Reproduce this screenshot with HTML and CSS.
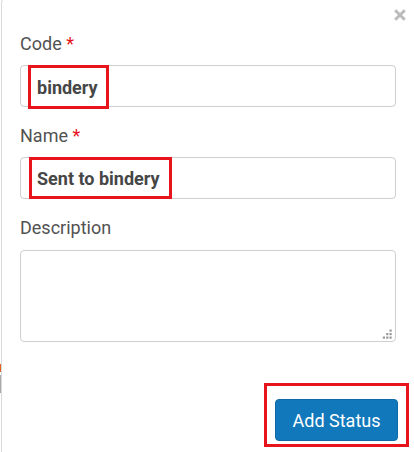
FILE: index.html
```html
<!DOCTYPE html>
<html lang="en">
<head>
<meta charset="utf-8">
<title>Add Status</title>
<link rel="stylesheet" href="styles.css">
</head>
<body>
<div class="page">
  <div class="backdrop-strip">
    <span class="strip-orange"></span>
    <span class="strip-gray"></span>
  </div>
  <div class="modal">
    <button class="close" type="button" aria-label="Close">
      <svg width="12" height="12" viewBox="0 0 12 12"><path d="M1.2 1.2 L10.8 10.8 M10.8 1.2 L1.2 10.8" stroke="#bbbbbb" stroke-width="3" stroke-linecap="butt"/></svg>
    </button>
    <div class="group">
      <label class="label">Code <span class="req">*</span></label>
      <div class="field"><span class="mark mark-code">bindery</span></div>
    </div>
    <div class="group">
      <label class="label">Name <span class="req">*</span></label>
      <div class="field"><span class="mark mark-name">Sent to bindery</span></div>
    </div>
    <div class="group">
      <label class="label">Description</label>
      <div class="textarea-wrap">
        <textarea class="textarea"></textarea>
        <svg class="grip" width="10" height="10" viewBox="0 0 10 10">
          <rect x="7.5" y="0.5" width="2.2" height="2.2" fill="#9a9a9a"/>
          <rect x="4.2" y="4" width="2.2" height="2.2" fill="#9a9a9a"/>
          <rect x="7.5" y="4" width="2.2" height="2.2" fill="#9a9a9a"/>
          <rect x="0.8" y="7.5" width="2.2" height="2.2" fill="#9a9a9a"/>
          <rect x="4.2" y="7.5" width="2.2" height="2.2" fill="#9a9a9a"/>
          <rect x="7.5" y="7.5" width="2.2" height="2.2" fill="#9a9a9a"/>
        </svg>
      </div>
    </div>
    <div class="footer">
      <div class="mark-btn">
        <button class="btn" type="button">Add Status</button>
      </div>
    </div>
  </div>
</div>
</body>
</html>
```

FILE: styles.css
```css
html, body {
  margin: 0;
  padding: 0;
  background: #ffffff;
  overflow: hidden;
}
body {
  font-family: Roboto, "Liberation Sans", sans-serif;
}
.page {
  display: flex;
  height: 452px;
}
.backdrop-strip {
  width: 1px;
  display: flex;
  flex-direction: column;
  padding-top: 364px;
}
.strip-orange {
  display: block;
  height: 8px;
  background: #e2612a;
}
.strip-gray {
  display: block;
  margin-top: 3px;
  height: 18px;
  background: #a8a8a8;
}
.modal {
  position: relative;
  flex: 1;
  margin-top: -3px;
  border: 1px solid #d9d9d9;
  border-right: none;
  border-bottom: none;
  border-top-left-radius: 6px;
  padding: 35px 18px 0 18px;
  background: #ffffff;
}
.close {
  position: absolute;
  top: 11px;
  right: 8px;
  width: 12px;
  height: 12px;
  padding: 0;
  border: none;
  background: transparent;
  display: flex;
}
.group + .group {
  margin-top: 18px;
}
.label {
  display: block;
  font-size: 18px;
  line-height: 22px;
  color: #525252;
  margin-bottom: 10px;
}
.req {
  color: #e8141c;
}
.field {
  box-sizing: border-box;
  height: 42px;
  border: 1px solid #cfcfcf;
  border-radius: 4px;
  display: flex;
  align-items: flex-start;
}
.mark {
  box-sizing: border-box;
  display: flex;
  align-items: center;
  margin-top: -1px;
  border: 3px solid #e8141c;
  font-size: 18px;
  font-weight: 700;
  color: #464646;
  padding-left: 6px;
}
.mark-code {
  margin-left: 7px;
  width: 81px;
  height: 44px;
}
.mark-name {
  margin-left: 8px;
  width: 143px;
  height: 42px;
  padding-left: 5px;
}
.textarea-wrap {
  position: relative;
  margin-top: 11px;
  height: 92px;
}
.textarea {
  display: block;
  box-sizing: border-box;
  width: 100%;
  height: 92px;
  margin: 0;
  border: 1px solid #cfcfcf;
  border-radius: 4px;
  resize: none;
  outline: none;
  font-family: inherit;
}
.grip {
  position: absolute;
  right: 4px;
  bottom: 3px;
}
.footer {
  display: flex;
  justify-content: flex-end;
  margin-top: 41px;
  margin-right: -13px;
}
.mark-btn {
  border: 3px solid #e8141c;
  padding: 13px 8px 3px 8px;
}
.btn {
  display: block;
  box-sizing: border-box;
  width: 123px;
  height: 42px;
  padding: 0;
  border: 1px solid #0d6aa6;
  border-radius: 4px;
  background: #1078bb;
  color: #ffffff;
  font-family: inherit;
  font-size: 18px;
}
```
